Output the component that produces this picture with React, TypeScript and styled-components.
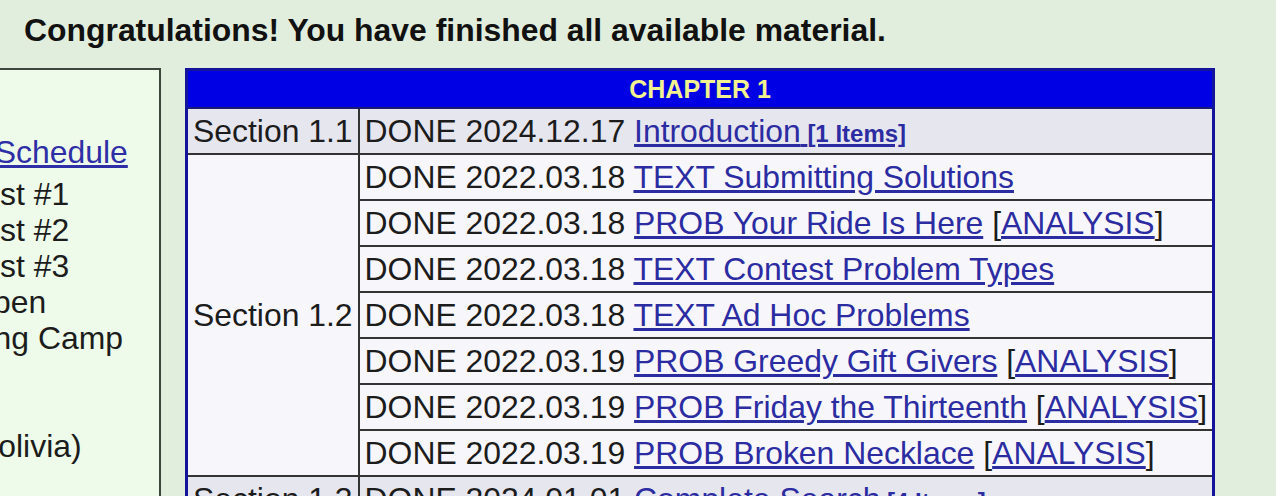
import styled, { createGlobalStyle } from 'styled-components';

const GlobalStyle = createGlobalStyle`
  html, body {
    margin: 0;
    overflow: hidden;
    background: #e2eedd;
  }
  body {
    font-family: "Liberation Sans", Arial, Helvetica, sans-serif;
    color: #1c1c1c;
  }
`;

const Page = styled.div`
  padding: 12px 0 0 24px;
  font-size: 31.9px;
  line-height: 36px;
`;

const Heading = styled.h2`
  margin: 0 0 20px;
  font-size: 31.9px;
  line-height: 36px;
  font-weight: bold;
  color: #111;
`;

const Content = styled.div`
  display: flex;
  align-items: flex-start;
  gap: 24px;
`;

const SidePanel = styled.div`
  margin-left: -124px;
  width: 261px;
  min-height: 520px;
  box-sizing: border-box;
  flex-shrink: 0;
  padding: 64px 0 0 13px;
  border: 2px solid #3c463c;
  background: #eefbea;
  white-space: nowrap;
`;

const SideLink = styled.a`
  display: block;
  margin-bottom: 6px;
  color: #2e2ea6;
  text-decoration: underline;
`;

const SideLine = styled.div`
  height: 36px;
`;

const Table = styled.table`
  border-collapse: collapse;
  border: 3px solid #14149a;
  white-space: nowrap;
  font-size: 31.9px;
  line-height: 36px;
`;

const HeaderCell = styled.th`
  background: #0000e4;
  color: #f2f290;
  font-size: 25px;
  line-height: 28px;
  font-weight: bold;
  text-align: center;
  padding: 4px;
  border-bottom: 2px solid #1a1a70;
`;

const Row = styled.tr<{ $shade: boolean }>`
  background: ${(p) => (p.$shade ? '#e6e6ee' : '#f7f7fb')};
`;

const SectionCell = styled.td`
  padding: 4px 5px;
  border: 2px solid #333;
  vertical-align: middle;
`;

const ItemCell = styled.td`
  padding: 4px 5px;
  border: 2px solid #333;
`;

const Link = styled.a`
  color: #2c2ca2;
  text-decoration: underline;
`;

const Count = styled.span`
  font-size: 24px;
  line-height: 20px;
  font-weight: bold;
`;

type Item = { date: string; title: string; analysis?: boolean; count?: string };

const sections: { name: string; shade: boolean; items: Item[] }[] = [
  {
    name: 'Section 1.1',
    shade: true,
    items: [{ date: '2024.12.17', title: 'Introduction', count: '[1 Items]' }],
  },
  {
    name: 'Section 1.2',
    shade: false,
    items: [
      { date: '2022.03.18', title: 'TEXT Submitting Solutions' },
      { date: '2022.03.18', title: 'PROB Your Ride Is Here', analysis: true },
      { date: '2022.03.18', title: 'TEXT Contest Problem Types' },
      { date: '2022.03.18', title: 'TEXT Ad Hoc Problems' },
      { date: '2022.03.19', title: 'PROB Greedy Gift Givers', analysis: true },
      { date: '2022.03.19', title: 'PROB Friday the Thirteenth', analysis: true },
      { date: '2022.03.19', title: 'PROB Broken Necklace', analysis: true },
    ],
  },
  {
    name: 'Section 1.3',
    shade: true,
    items: [{ date: '2024.01.01', title: 'Complete Search', count: '[4 Items]' }],
  },
];

const schedule = ['Contest #1', 'Contest #2', 'Contest #3', 'US Open', 'Training Camp', '', '', 'IOI (Bolivia)'];

export default function App() {
  return (
    <>
      <GlobalStyle />
      <Page>
        <Heading>Congratulations! You have finished all available material.</Heading>
        <Content>
          <SidePanel>
            <SideLink href="#">2025 Schedule</SideLink>
            {schedule.map((line, i) => (
              <SideLine key={i}>{line || '\u00a0'}</SideLine>
            ))}
          </SidePanel>
          <Table>
            <thead>
              <tr>
                <HeaderCell colSpan={2}>CHAPTER 1</HeaderCell>
              </tr>
            </thead>
            <tbody>
              {sections.map((section) =>
                section.items.map((item, i) => (
                  <Row key={section.name + i} $shade={section.shade}>
                    {i === 0 && <SectionCell rowSpan={section.items.length}>{section.name}</SectionCell>}
                    <ItemCell>
                      DONE {item.date}{' '}
                      <Link href="#">
                        {item.title}
                        {item.count && <Count> {item.count}</Count>}
                      </Link>
                      {item.analysis && (
                        <>
                          {' '}[<Link href="#">ANALYSIS</Link>]
                        </>
                      )}
                    </ItemCell>
                  </Row>
                ))
              )}
            </tbody>
          </Table>
        </Content>
      </Page>
    </>
  );
}
